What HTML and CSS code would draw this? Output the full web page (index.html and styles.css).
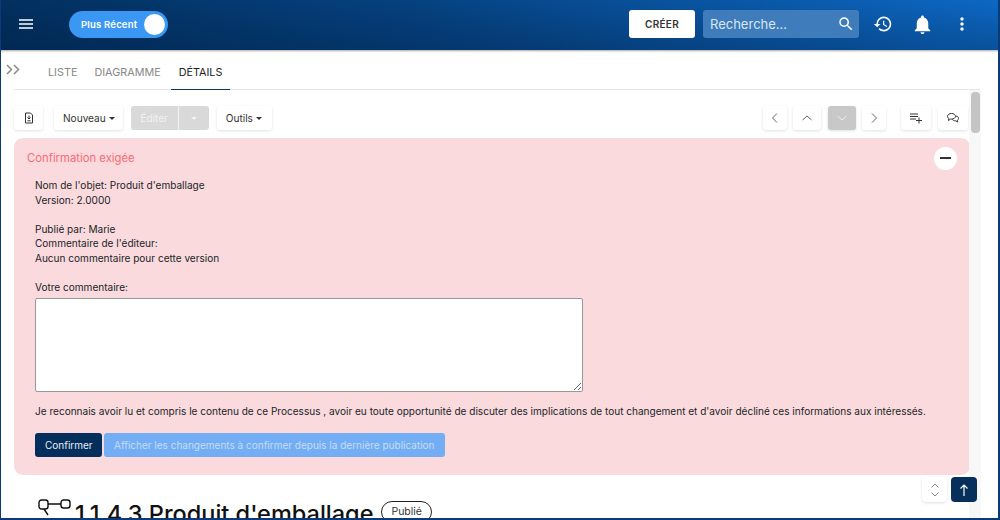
FILE: index.html
```html
<!DOCTYPE html>
<html lang="fr">
<head>
<meta charset="utf-8">
<title>Produit d'emballage</title>
<link rel="stylesheet" href="styles.css">
</head>
<body>
<div class="app">
  <header class="topbar">
    <button class="icon-btn menu" aria-label="Menu">
      <svg width="16" height="12" viewBox="0 0 16 12"><path d="M1 2h14M1 6h14M1 10h14" stroke="#fff" stroke-width="1.500" fill="none"/></svg>
    </button>
    <div class="toggle"><span class="toggle-label">Plus Récent</span><span class="knob"></span></div>
    <div class="spacer"></div>
    <button class="create">CRÉER</button>
    <div class="search">
      <span class="search-text">Recherche...</span>
      <svg width="18" height="18" viewBox="0 0 24 24"><path fill="#fff" d="M15.500 14h-.79l-.28-.27A6.471 6.471 0 0 0 16 9.500 6.500 6.500 0 1 0 9.500 16c1.610 0 3.090-.59 4.230-1.570l.27.28v.79l5 4.990L20.490 19l-4.990-5zm-6 0C7.010 14 5 11.990 5 9.500S7.010 5 9.500 5 14 7.010 14 9.500 11.990 14 9.500 14z"/></svg>
    </div>
    <button class="icon-btn history" aria-label="Historique">
      <svg width="20" height="20" viewBox="0 0 24 24"><path fill="#fff" d="M13 3a9 9 0 0 0-9 9H1l3.890 3.890.07.14L9 12H6c0-3.870 3.130-7 7-7s7 3.130 7 7-3.130 7-7 7c-1.930 0-3.680-.79-4.940-2.060l-1.420 1.420A8.954 8.954 0 0 0 13 21a9 9 0 0 0 0-18zm-1 5v5l4.280 2.540.72-1.210-3.500-2.080V8H12z"/></svg>
    </button>
    <button class="icon-btn bell" aria-label="Notifications">
      <svg width="23" height="23" viewBox="0 0 24 24"><path fill="#fff" d="M12 22c1.100 0 2-.9 2-2h-4c0 1.100.9 2 2 2zm6-6v-5c0-3.070-1.630-5.640-4.500-6.320V4c0-.83-.67-1.500-1.500-1.500s-1.500.67-1.500 1.500v.68C7.640 5.360 6 7.920 6 11v5l-2 2v1h16v-1l-2-2z"/></svg>
    </button>
    <button class="icon-btn dots" aria-label="Plus">
      <svg width="20" height="20" viewBox="0 0 24 24"><path fill="#fff" d="M12 8c1.100 0 2-.9 2-2s-.9-2-2-2-2 .9-2 2 .9 2 2 2zm0 2c-1.100 0-2 .9-2 2s.9 2 2 2 2-.9 2-2-.9-2-2-2zm0 6c-1.100 0-2 .9-2 2s.9 2 2 2 2-.9 2-2-.9-2-2-2z"/></svg>
    </button>
  </header>

  <main class="main">
    <svg class="expand" width="15" height="11" viewBox="0 0 15 11"><path d="M1 1l4.500 4.500L1 10M8 1l4.500 4.500L8 10" fill="none" stroke="#8a8a8a" stroke-width="1.500"/></svg>
    <nav class="tabs">
      <a class="tab">LISTE</a>
      <a class="tab">DIAGRAMME</a>
      <a class="tab active">DÉTAILS</a>
    </nav>

    <div class="scroll-wrap">
      <div class="content">
        <div class="toolbar">
          <button class="tbtn square"><svg width="12" height="12" viewBox="0 0 12 12"><path d="M2.500 1h5l2 2v8h-7z M4.500 5.500L6 7l1.500-1.500M6 3.500V7M4.500 8.800h3" fill="none" stroke="#333" stroke-width="1"/></svg></button>
          <button class="tbtn caret-btn">Nouveau<i class="caret"></i></button>
          <div class="split">
            <span class="split-main">Éditer</span><span class="split-arrow"><i class="caret"></i></span>
          </div>
          <button class="tbtn caret-btn">Outils<i class="caret"></i></button>
          <div class="spacer"></div>
          <div class="nav-group">
            <button class="tbtn nav prev"><svg width="10" height="12" viewBox="0 0 10 12"><path d="M7 1.500L2.500 6 7 10.500" fill="none" stroke="#666" stroke-width="1"/></svg></button>
            <button class="tbtn nav up"><svg width="12" height="8" viewBox="0 0 12 8"><path d="M1.500 6L6 2l4.500 4" fill="none" stroke="#666" stroke-width="1"/></svg></button>
            <button class="tbtn nav down"><svg width="12" height="8" viewBox="0 0 12 8"><path d="M1.500 2L6 6l4.500-4" fill="none" stroke="#eee" stroke-width="1"/></svg></button>
            <button class="tbtn nav next"><svg width="10" height="12" viewBox="0 0 10 12"><path d="M3 1.500L7.500 6 3 10.500" fill="none" stroke="#666" stroke-width="1"/></svg></button>
          </div>
          <button class="tbtn wide"><svg width="14" height="12" viewBox="0 0 14 12"><path d="M1 2h8M1 4.500h8M1 7h6M10 5.500v6M7 8.500h6" fill="none" stroke="#333" stroke-width="1"/></svg></button>
          <button class="tbtn chat"><svg width="14" height="12" viewBox="0 0 14 12"><path d="M5.500 1.500c2.200 0 4 1.200 4 2.800s-1.800 2.800-4 2.800l-1 0L2.500 8.500l.4-2C1.900 6 1.500 5.200 1.500 4.300c0-1.600 1.800-2.800 4-2.800zM10 4c1.500.3 2.500 1.200 2.500 2.400 0 .8-.4 1.500-1.200 1.900l.4 1.700-2-1.200c-1.600.1-3-.5-3.400-1.500" fill="none" stroke="#333" stroke-width="1"/></svg></button>
        </div>

        <section class="alert">
          <div class="alert-head">
            <h2 class="alert-title">Confirmation exigée</h2>
            <button class="collapse" aria-label="Réduire"><span class="minus"></span></button>
          </div>
          <div class="alert-body">
            <p class="info">Nom de l'objet: Produit d'emballage<br>Version: 2.0000</p>
            <p class="info">Publié par: Marie<br>Commentaire de l'éditeur:<br>Aucun commentaire pour cette version</p>
            <label class="info label" for="comment">Votre commentaire:</label>
            <textarea id="comment" class="comment"></textarea>
            <p class="ack">Je reconnais avoir lu et compris le contenu de ce Processus , avoir eu toute opportunité de discuter des implications de tout changement et d'avoir décliné ces informations aux intéressés.</p>
            <div class="actions">
              <button class="btn primary">Confirmer</button>
              <button class="btn secondary">Afficher les changements à confirmer depuis la dernière publication</button>
            </div>
          </div>
        </section>

        <div class="title-row">
          <svg class="title-icon" width="34" height="26" viewBox="0 0 34 26"><rect x="1" y="1" width="9" height="9" rx="2.500" fill="none" stroke="#111" stroke-width="1.400"/><rect x="23" y="1" width="9" height="8" rx="2.500" fill="none" stroke="#111" stroke-width="1.400"/><path d="M10 5h13M6 10l4 6" fill="none" stroke="#111" stroke-width="1.400"/></svg>
          <h1 class="title">1.1.4.3 Produit d'emballage</h1>
          <span class="badge">Publié</span>
        </div>
      </div>
      <div class="track"><div class="thumb"></div></div>
      <button class="float-btn updown" aria-label="Défiler"><svg width="12" height="16" viewBox="0 0 12 16"><path d="M2.500 5.500L6 2l3.500 3.500M2.500 10.500L6 14l3.500-3.500" fill="none" stroke="#888" stroke-width="1"/></svg></button>
      <button class="float-btn totop" aria-label="Haut"><svg width="12" height="14" viewBox="0 0 12 14"><path d="M6 13V2M2.500 5.500L6 2l3.500 3.500" fill="none" stroke="#fff" stroke-width="1.200"/></svg></button>
    </div>
  </main>
</div>
</body>
</html>
```
FILE: styles.css
```css
* { box-sizing: border-box; }
html, body { margin: 0; height: 100%; overflow: hidden; }
body { font-family: Inter, Roboto, "Liberation Sans", sans-serif; color: #212529; background: #fff; }
button { font-family: inherit; border: 0; padding: 0; background: none; cursor: pointer; }
p, h1, h2 { margin: 0; }

.app { width: 1000px; height: 520px; display: flex; flex-direction: column; border-left: 1px solid #0b3a78; border-right: 2px solid #0b3a78; border-bottom: 2px solid #0b3a78; overflow: hidden; }
.spacer { flex: 1; }

.topbar { height: 50px; margin-left: -1px; margin-right: -2px; padding-right: 28px; padding-bottom: 2px; flex: none; display: flex; align-items: center; background: linear-gradient(to bottom, rgba(0,20,50,0) 0%, rgba(0,20,50,.28) 100%), linear-gradient(to right, #02305f 0%, #05417f 40%, #0d68c4 100%); box-shadow: 0 1px 2px rgba(0,0,0,.35); position: relative; z-index: 2; }
.icon-btn { display: flex; align-items: center; justify-content: center; }
.menu { width: 16px; margin-left: 18px; }
.toggle { margin-left: 35px; width: 99px; height: 27px; border-radius: 14px; background: #3a97f3; display: flex; align-items: center; padding: 0 3px 0 12px; justify-content: space-between; }
.toggle-label { font-size: 9.500px; font-weight: 600; color: #fff; letter-spacing: .2px; }
.knob { width: 21px; height: 21px; border-radius: 50%; background: #fff; }
.create { width: 66px; height: 28px; border-radius: 3px; background: #fff; color: #333; font-size: 10px; font-weight: 600; letter-spacing: .3px; }
.search { margin-left: 8px; width: 156px; height: 28px; border-radius: 3px; background: #3f7cbb; display: flex; align-items: center; justify-content: space-between; padding: 0 4px 0 7px; }
.search-text { font-size: 13px; color: #dbe6f2; }
.history { margin-left: 14px; width: 20px; }
.bell { margin-left: 18px; width: 23px; }
.dots { margin-left: 18px; width: 20px; }

.main { flex: 1; min-height: 0; display: flex; flex-direction: column; position: relative; background: #fff; }
.expand { position: absolute; left: 5px; top: 14px; }
.tabs { height: 40px; margin-left: 13px; margin-right: 18px; flex: none; display: flex; padding-left: 21px; border-bottom: 1px solid #e6e6e6; }
.tab { padding: 16px 12px 0 13px; font-size: 10.800px; color: #888; height: 40px; }
.tab:nth-child(2) { padding-left: 5px; padding-right: 10px; }
.tab.active { color: #222; border-bottom: 1.500px solid #12355f; padding-left: 8px; padding-right: 8px; width: 59px; }

.scroll-wrap { flex: 1; min-height: 0; display: flex; position: relative; }
.content { width: 968px; overflow: hidden; padding: 0 0 0 13px; }
.track { width: 12px; background: #f7f7f7; flex: none; padding: 2px 1.500px; }
.thumb { height: 41px; border-radius: 4px; background: #c4c4c4; }

.toolbar { height: 48px; display: flex; align-items: center; padding-top: 8px; padding-right: 1px; }
.tbtn { height: 24px; background: #fff; border-radius: 3px; box-shadow: 0 1px 3px rgba(0,0,0,.12); font-size: 10.100px; color: #333; display: flex; align-items: center; justify-content: center; }
.square { width: 29px; }
.caret-btn { padding: 0 8.500px 0 9px; gap: 3px; margin-left: 11px; }
.caret { display: inline-block; width: 0; height: 0; border-left: 3.500px solid transparent; border-right: 3.500px solid transparent; border-top: 3.500px solid currentColor; }
.split { margin-left: 7.500px; height: 24px; width: 78px; border-radius: 3px; background: #d9d9d9; display: flex; color: #f2f2f2; font-size: 10px; }
.split-main { width: 48px; display: flex; align-items: center; justify-content: center; border-right: 1px solid #f2f2f2; }
.split-arrow { flex: 1; display: flex; align-items: center; justify-content: center; }
.split + .caret-btn { margin-left: 8px; padding-right: 10px; }
.nav-group { display: flex; gap: 6px; }
.nav { width: 24px; }
.up { width: 28px; }
.down { width: 28px; background: #c8c8c8; margin-left: 1px; }
.wide { width: 30px; margin-left: 15px; }
.chat { width: 30px; margin-left: 7px; }

.alert { width: 956px; height: 337px; background: #fadadd; border-radius: 9px; padding: 0 13px; }
.alert-head { height: 40px; display: flex; align-items: center; justify-content: space-between; }
.alert-title { font-size: 11.300px; font-weight: 400; color: #fb6a75; }
.collapse { width: 23px; height: 23px; border-radius: 50%; background: #fff; display: flex; align-items: center; justify-content: center; }
.minus { width: 11px; height: 1.500px; background: #333; }
.alert-body { padding-left: 8px; }
.info { font-size: 10.050px; line-height: 14.600px; color: #212529; display: block; margin-bottom: 14.600px; }
.label { margin-bottom: 3px; }
.comment { display: block; width: 548px; height: 94px; border: 1px solid #999; border-radius: 2px; background: #fff; resize: vertical; }
.ack { font-size: 10.050px; line-height: 14px; margin-top: 12px; white-space: nowrap; }
.actions { display: flex; gap: 2px; margin-top: 15px; }
.btn { height: 24px; border-radius: 3px; font-size: 10px; padding: 0 10px; }
.primary { background: #042f5c; color: #e8eef5; width: 67px; }
.secondary { background: #73adf3; color: #c5dcf8; }

.title-row { display: flex; align-items: flex-start; margin-top: 24px; margin-left: 24px; height: 30px; }
.title-icon { flex: none; }
.title { font-size: 23.500px; font-weight: 500; color: #111; line-height: 28px; margin-left: 3px; margin-top: 1px; white-space: nowrap; }
.badge { margin-left: 8px; margin-top: 2px; border: 1px solid #222; border-radius: 12px; padding: 3px 9px; font-size: 10.500px; height: 22px; color: #333; }

.float-btn { position: absolute; width: 25px; height: 25px; border-radius: 4px; display: flex; align-items: center; justify-content: center; }
.updown { left: 921px; top: 387px; background: #fff; box-shadow: 0 1px 3px rgba(0,0,0,.12); }
.totop { left: 950px; top: 387px; width: 26px; background: #062f5b; }
```
